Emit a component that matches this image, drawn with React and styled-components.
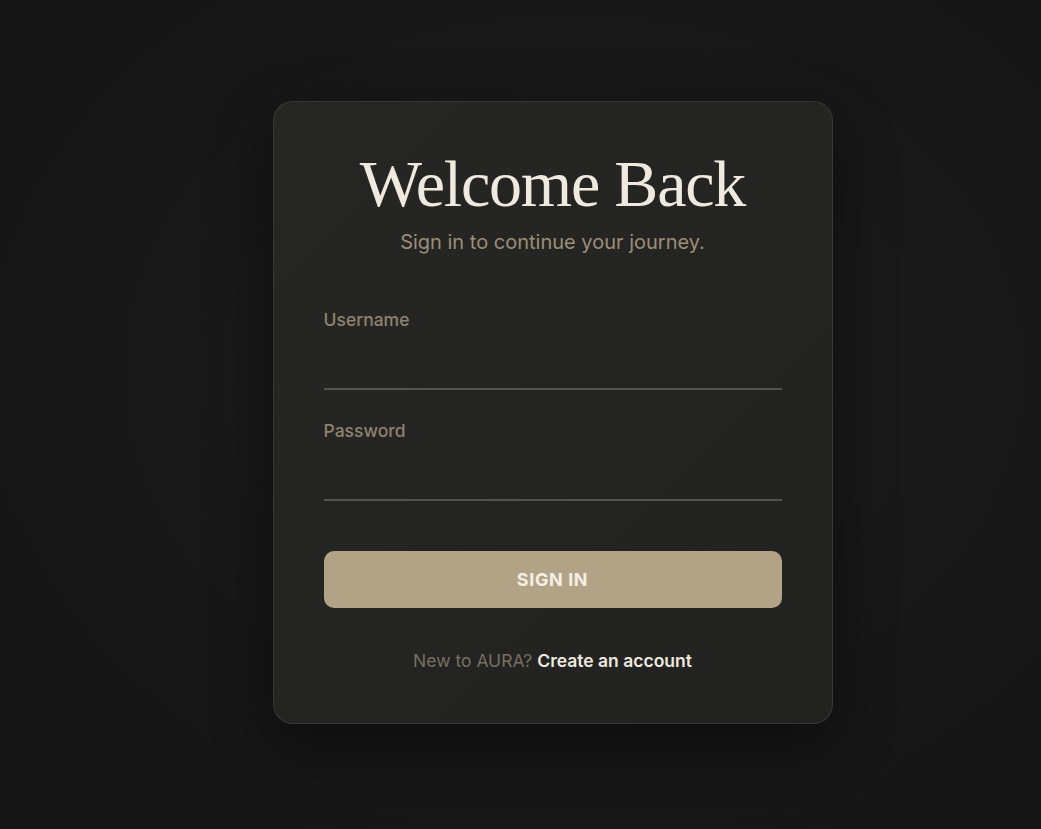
import React from "react";
import styled, { createGlobalStyle } from "styled-components";

const GlobalStyle = createGlobalStyle`
  html, body {
    margin: 0;
    padding: 0;
    background: #171717;
  }
  body {
    font-family: Inter, "Noto Sans", sans-serif;
    -webkit-font-smoothing: antialiased;
  }
  * {
    box-sizing: border-box;
  }
`;

const Page = styled.div`
  min-height: 829px;
  display: flex;
  justify-content: center;
  align-items: flex-start;
  padding: 101px 0 0 64px;
  background: radial-gradient(ellipse at 55% 45%, #1c1c1b 0%, #171717 60%, #151515 100%);
`;

const Card = styled.div`
  width: 560px;
  padding: 44px 50px 48px;
  border-radius: 20px;
  border: 1px solid rgba(255, 255, 255, 0.09);
  background: linear-gradient(135deg, #262624 0%, #242422 50%, #222220 100%);
  box-shadow: 0 20px 60px rgba(0, 0, 0, 0.45);
  display: flex;
  flex-direction: column;
`;

const Title = styled.h1`
  margin: 0;
  text-align: center;
  font-family: "Liberation Serif", "DejaVu Serif", serif;
  font-weight: 400;
  font-size: 66px;
  line-height: 1.15;
  letter-spacing: -1.2px;
  color: #efe9de;
`;

const Subtitle = styled.p`
  margin: 5px 0 0;
  text-align: center;
  font-size: 20px;
  line-height: 1.5;
  color: #9d8e77;
`;

const Form = styled.form`
  margin-top: 50px;
  display: flex;
  flex-direction: column;
`;

const Field = styled.div`
  display: flex;
  flex-direction: column;
  margin-bottom: ${(p) => p.$gap}px;
`;

const Label = styled.label`
  font-size: 17.5px;
  font-weight: 500;
  line-height: 1.5;
  color: #8f836f;
`;

const Input = styled.input`
  margin-top: 8px;
  height: 49px;
  padding: 0;
  border: none;
  border-bottom: 2px solid #57524a;
  background: transparent;
  color: #efe9de;
  font-family: Inter, sans-serif;
  font-size: 17px;
  outline: none;
`;

const Button = styled.button`
  height: 57px;
  border: none;
  border-radius: 10px;
  background: #b3a386;
  color: #f3efe7;
  font-family: Inter, sans-serif;
  font-size: 18px;
  font-weight: 700;
  letter-spacing: 0.6px;
  text-transform: uppercase;
  cursor: pointer;
`;

const Footer = styled.p`
  margin: 40px 0 0;
  text-align: center;
  font-size: 17.5px;
  line-height: 1.5;
  color: #786f60;
`;

const FooterLink = styled.a`
  color: #eee9df;
  font-weight: 600;
  text-decoration: none;
`;

const App = () => {
  return (
    <>
      <GlobalStyle />
      <Page>
        <Card>
          <Title>Welcome Back</Title>
          <Subtitle>Sign in to continue your journey.</Subtitle>
          <Form onSubmit={(e) => e.preventDefault()}>
            <Field $gap={28}>
              <Label htmlFor="username">Username</Label>
              <Input id="username" type="text" />
            </Field>
            <Field $gap={50}>
              <Label htmlFor="password">Password</Label>
              <Input id="password" type="password" />
            </Field>
            <Button type="submit">Sign In</Button>
          </Form>
          <Footer>
            New to AURA? <FooterLink href="#">Create an account</FooterLink>
          </Footer>
        </Card>
      </Page>
    </>
  );
};

export default App;
